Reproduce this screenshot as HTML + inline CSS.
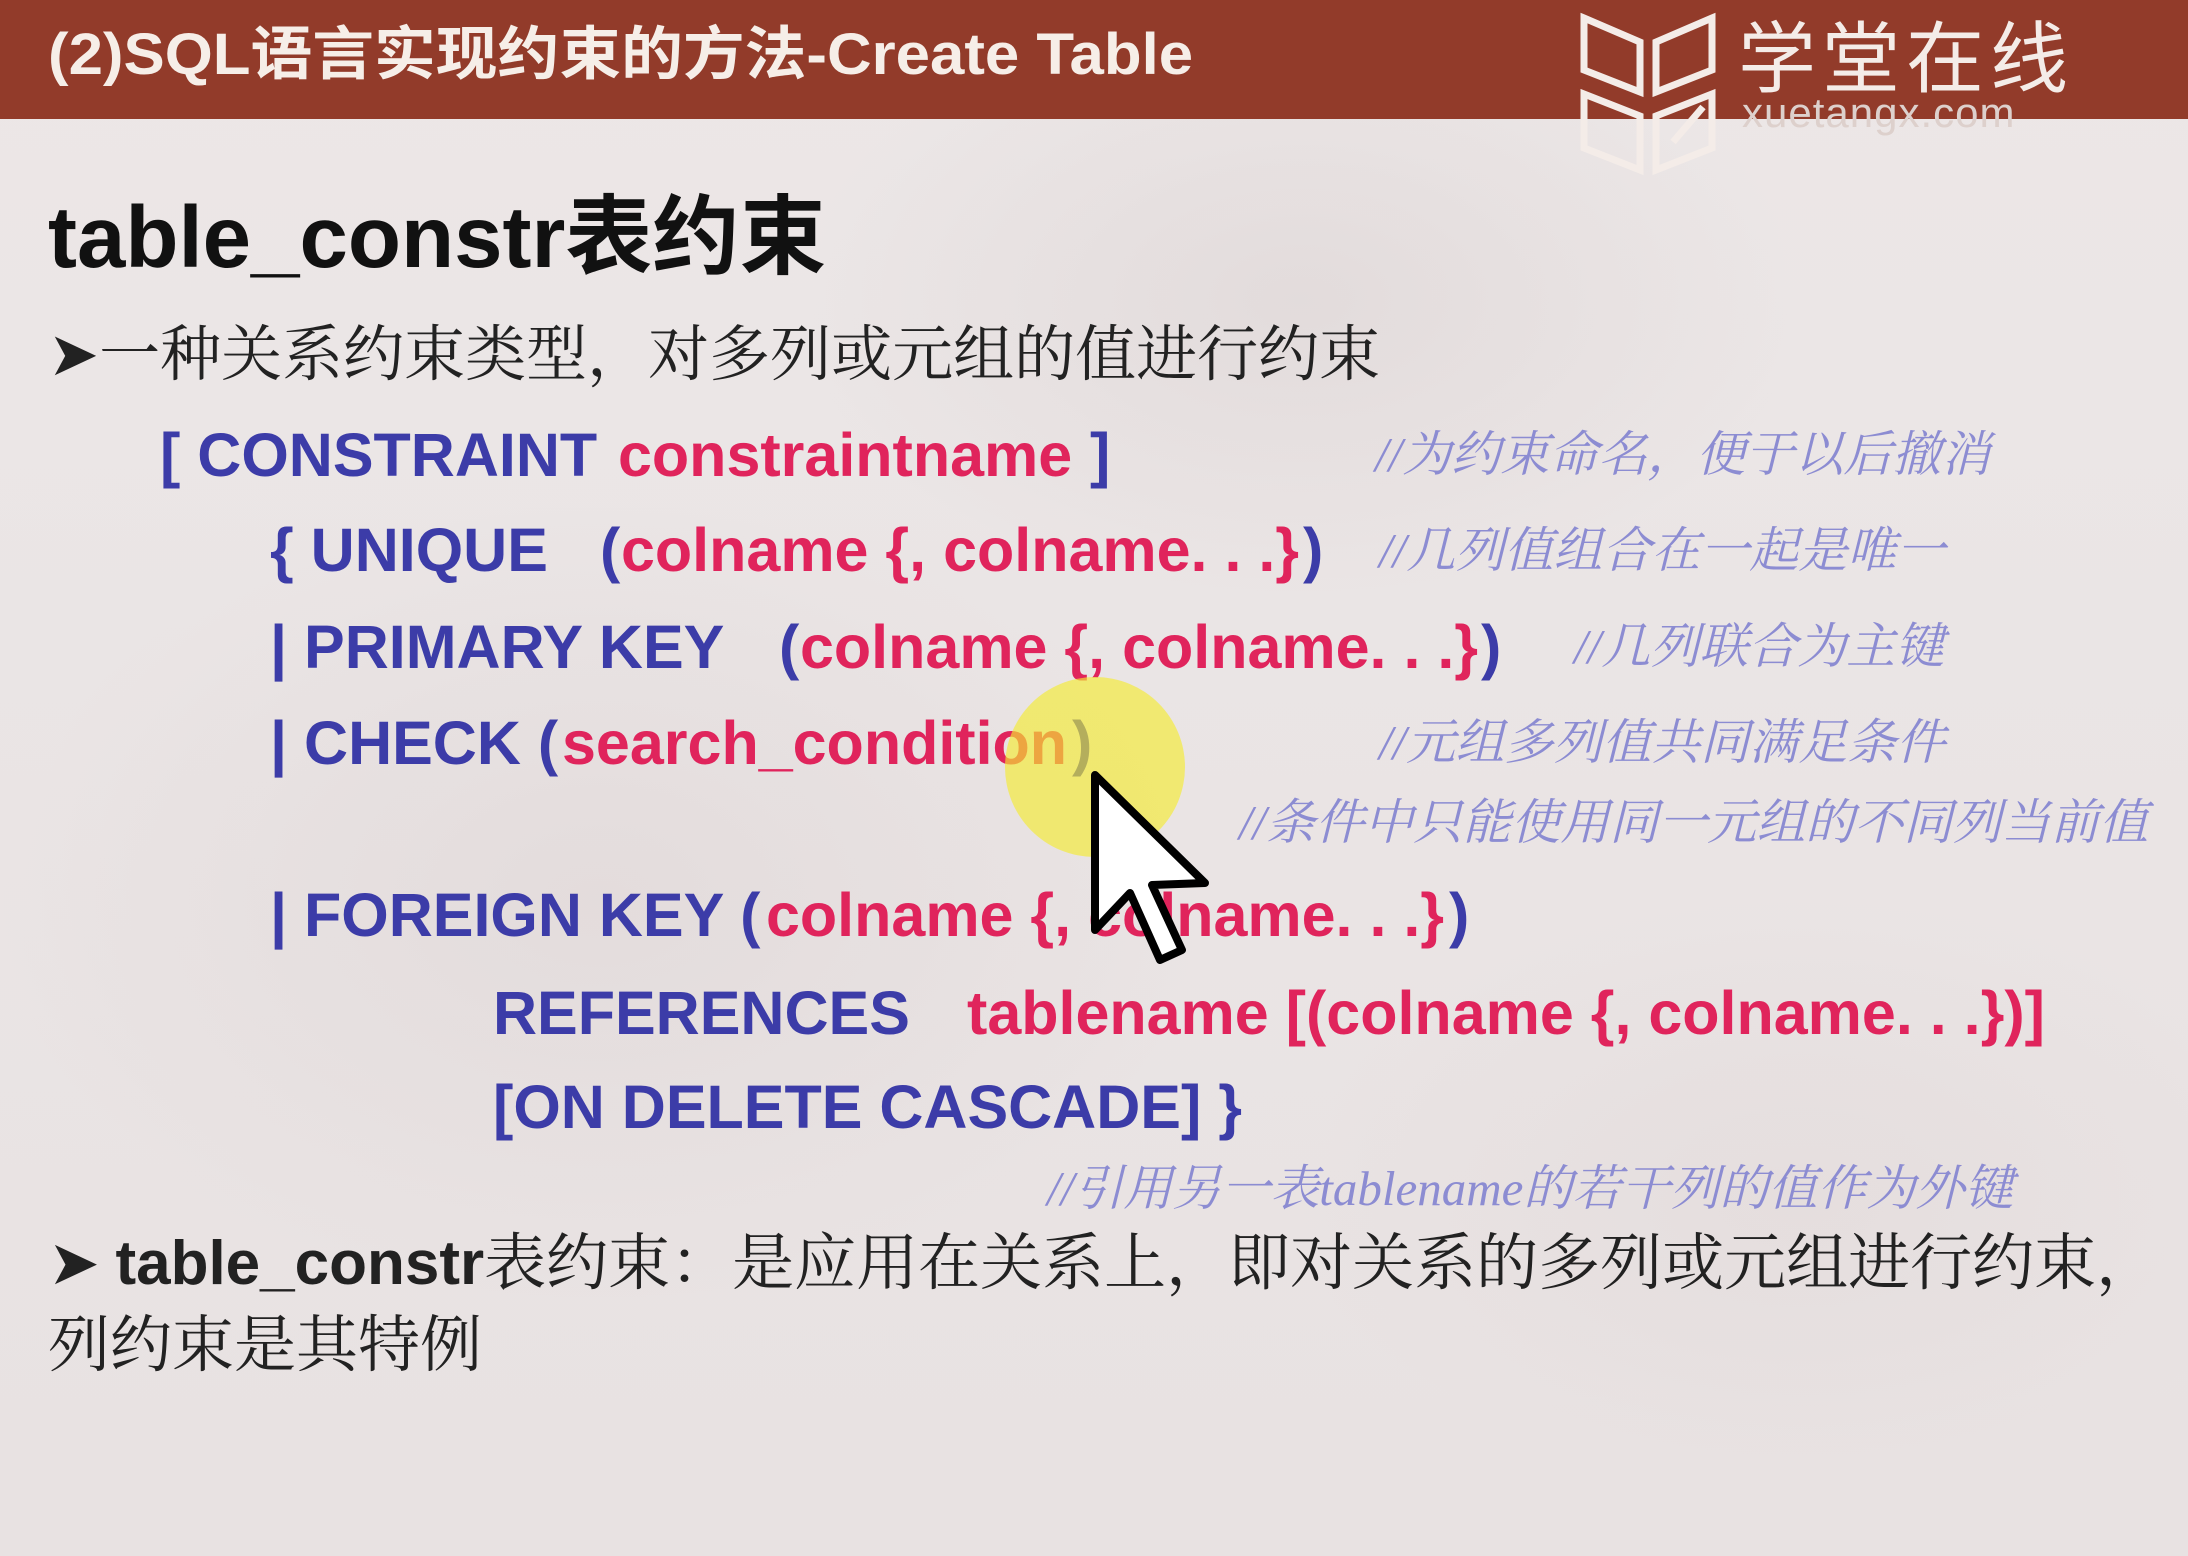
<!DOCTYPE html>
<html><head><meta charset="utf-8">
<style>
html,body{margin:0;padding:0}
body{width:2188px;height:1556px;position:relative;overflow:hidden;background:#ebe5e5;font-family:"Liberation Sans","Noto Sans CJK SC",sans-serif}
.bg{position:absolute;inset:0;background:
radial-gradient(ellipse 500px 300px at 1300px 300px,rgba(210,200,200,.35),transparent),
radial-gradient(ellipse 600px 400px at 600px 900px,rgba(215,205,205,.35),transparent),
radial-gradient(ellipse 500px 300px at 1800px 1200px,rgba(220,210,210,.3),transparent),
linear-gradient(#ece7e7,#e8e2e2)}
.hdr{position:absolute;left:0;top:0;width:2188px;height:119px;background:#923b2a}
.t{position:absolute;white-space:nowrap;line-height:1}
.code{font-weight:bold;font-size:61px;letter-spacing:0}
.b{color:#3c3ca8}.p{color:#e0245c}
.c{font-family:"Liberation Serif","Noto Serif CJK SC",serif;font-size:49px;color:#8c8cd2;font-style:italic}
.zh{font-family:"Liberation Serif","Noto Serif CJK SC",serif;font-size:61px;color:#222}
</style></head><body>
<div class="bg"></div>
<div class="hdr"></div>
<div class="t" style="left:48px;top:26px;font-size:58px;font-weight:bold;color:#f6eee8;transform:scaleX(1.065);transform-origin:left">(2)SQL语言实现约束的方法-Create Table</div>
<svg style="position:absolute;left:1578px;top:12px" width="140" height="165" viewBox="0 0 140 165" fill="none" stroke="#f4ece8" stroke-width="7">
<path d="M6 6 L62 30 L62 80 L6 58 Z"/><path d="M134 6 L78 30 L78 80 L134 58 Z"/>
<path d="M6 82 L62 104 L62 158 L6 136 Z"/><path d="M134 82 L78 104 L78 158 L134 136 Z"/><path d="M95 130 L125 95"/>
</svg>
<div class="t" style="left:1738px;top:20px;font-size:78px;color:#f4ece8;letter-spacing:6px">学堂在线</div>
<div class="t" style="left:1742px;top:92px;font-size:42px;color:#ddd0cc;letter-spacing:1px">xuetangx.com</div>

<div class="t" style="left:48px;top:194px;font-size:87px;font-weight:bold;color:#111">table_constr表约束</div>
<div class="t zh" style="left:48px;top:325px">➤一种关系约束类型，对多列或元组的值进行约束</div>

<div class="t code b" style="left:160px;top:425px">[ CONSTRAINT</div>
<div class="t code p" style="left:618px;top:425px">constraintname</div>
<div class="t code b" style="left:1090px;top:425px">]</div>
<div class="t c" style="left:1375px;top:430px">//为约束命名，便于以后撤消</div>

<div class="t code b" style="left:270px;top:520px">{ UNIQUE</div>
<div class="t code b" style="left:600px;top:520px">(</div>
<div class="t code p" style="left:621px;top:520px">colname {, colname. . .}</div>
<div class="t code b" style="left:1303px;top:520px">)</div>
<div class="t c" style="left:1379px;top:526px">//几列值组合在一起是唯一</div>

<div class="t code b" style="left:270px;top:617px">| PRIMARY KEY</div>
<div class="t code b" style="left:779px;top:617px">(</div>
<div class="t code p" style="left:800px;top:617px">colname {, colname. . .}</div>
<div class="t code b" style="left:1481px;top:617px">)</div>
<div class="t c" style="left:1574px;top:622px">//几列联合为主键</div>

<div class="t code b" style="left:270px;top:713px">| CHECK (</div>
<div class="t code p" style="left:562px;top:713px">search_condition</div>
<div class="t code b" style="left:1072px;top:713px">)</div>
<div class="t c" style="left:1379px;top:718px">//元组多列值共同满足条件</div>
<div class="t c" style="left:1239px;top:798px">//条件中只能使用同一元组的不同列当前值</div>

<div class="t code b" style="left:270px;top:885px">| FOREIGN KEY (</div>
<div class="t code p" style="left:766px;top:885px">colname {, colname. . .}</div>
<div class="t code b" style="left:1449px;top:885px">)</div>

<div class="t code b" style="left:493px;top:983px">REFERENCES</div>
<div class="t code p" style="left:967px;top:983px">tablename [(colname {, colname. . .})]</div>
<div class="t code b" style="left:493px;top:1077px">[ON DELETE CASCADE] }</div>
<div class="t c" style="left:1047px;top:1164px">//引用另一表tablename的若干列的值作为外键</div>

<div class="t zh" style="left:48px;top:1233px;font-size:62px">➤ <span style="font-family:'Liberation Sans',sans-serif;font-weight:bold">table_constr</span>表约束：是应用在关系上，即对关系的多列或元组进行约束，</div>
<div class="t zh" style="left:48px;top:1315px;font-size:62px">列约束是其特例</div>

<div style="position:absolute;left:1005px;top:677px;width:180px;height:180px;border-radius:50%;background:rgba(245,235,50,.65)"></div>
<svg style="position:absolute;left:1080px;top:765px" width="140" height="210" viewBox="0 0 140 210">
<path d="M15 10 L15 165 L50 128 L80 195 L102 185 L72 120 L125 118 Z" fill="#fff" stroke="#000" stroke-width="8" stroke-linejoin="round"/>
</svg>
</body></html>
